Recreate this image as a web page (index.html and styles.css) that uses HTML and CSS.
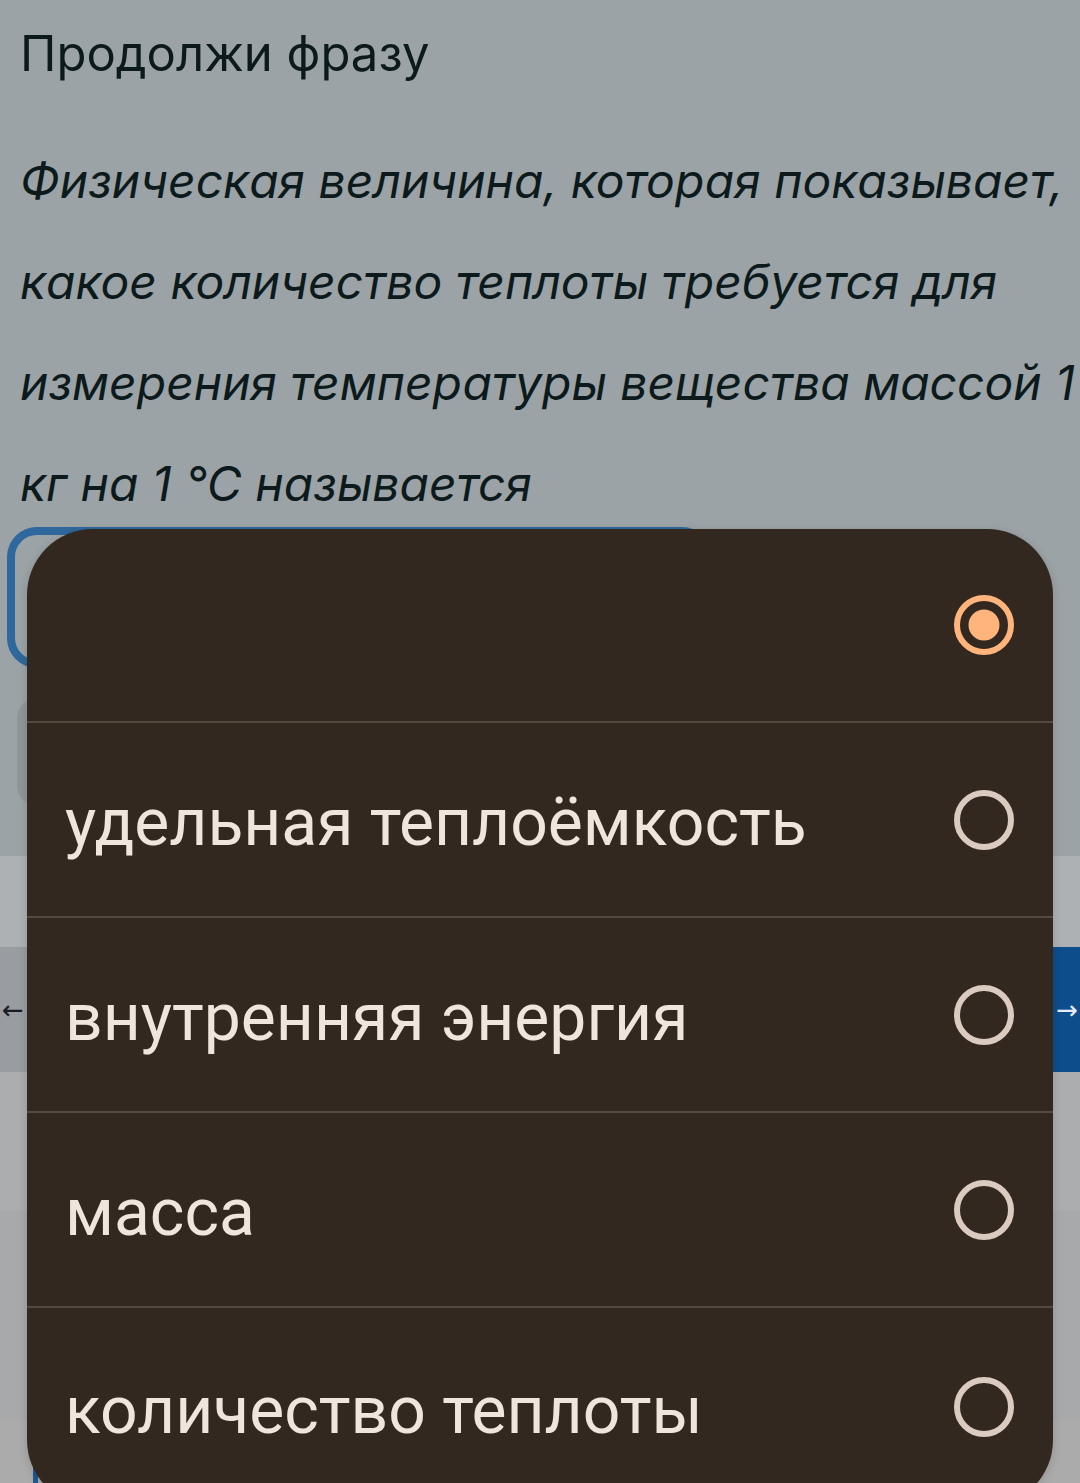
FILE: index.html
```html
<!DOCTYPE html>
<html lang="ru">

<head>
    <meta charset="UTF-8">
    <meta name="viewport" content="width=device-width, initial-scale=1.0">
    <title>Продолжи фразу</title>
    <link rel="stylesheet" href="styles.css">
</head>

<body>
    <!-- задание -->
    <main class="exercise">
        <h1 class="task-title">Продолжи фразу</h1>
        <p class="task-text">Физическая величина, которая показывает,<br>
            какое количество теплоты требуется для<br>
            измерения температуры вещества массой 1<br>
            кг на 1 °C называется</p>
        <div class="answer-select"></div>
        <button class="check-btn" type="button"></button>
    </main>

    <!-- нижняя часть страницы -->
    <footer class="footer">
        <div class="band band-a"></div>
        <nav class="nav-row">
            <button class="nav-btn nav-prev" type="button">&larr;</button>
            <button class="nav-btn nav-next" type="button">&rarr;</button>
        </nav>
        <div class="band band-b"></div>
        <div class="band band-c"></div>
        <div class="band band-d"><span class="mini-field"></span></div>
    </footer>

    <!-- выпадающий список вариантов -->
    <div class="picker" role="radiogroup">
        <label class="option option-empty">
            <span class="option-text"></span>
            <svg class="radio radio-on" viewBox="0 0 64 64" width="64" height="64">
                <circle cx="32" cy="32" r="27" fill="none" stroke="#ffb47c" stroke-width="6"/>
                <circle cx="32" cy="32" r="15.5" fill="#ffb47c"/>
            </svg>
        </label>
        <label class="option">
            <span class="option-text">удельная теплоёмкость</span>
            <svg class="radio" viewBox="0 0 64 64" width="64" height="64">
                <circle cx="32" cy="32" r="27" fill="none" stroke="#dbcac0" stroke-width="6"/>
            </svg>
        </label>
        <label class="option">
            <span class="option-text">внутренняя энергия</span>
            <svg class="radio" viewBox="0 0 64 64" width="64" height="64">
                <circle cx="32" cy="32" r="27" fill="none" stroke="#dbcac0" stroke-width="6"/>
            </svg>
        </label>
        <label class="option">
            <span class="option-text">масса</span>
            <svg class="radio" viewBox="0 0 64 64" width="64" height="64">
                <circle cx="32" cy="32" r="27" fill="none" stroke="#dbcac0" stroke-width="6"/>
            </svg>
        </label>
        <label class="option option-last">
            <span class="option-text">количество теплоты</span>
            <svg class="radio" viewBox="0 0 64 64" width="64" height="64">
                <circle cx="32" cy="32" r="27" fill="none" stroke="#dbcac0" stroke-width="6"/>
            </svg>
        </label>
    </div>
</body>

</html>
```

FILE: styles.css
```css
html,
body {
    margin: 0;
    height: 100%;
    overflow: hidden;
}

body {
    background-color: #9ba3a6;
    font-family: Inter, "Noto Sans", sans-serif;
    color: #0c1a1c;
    position: relative;
}

/* задание */
.exercise {
    padding: 22px 0 0 20px;
    height: 856px;
    box-sizing: border-box;
}

.task-title {
    margin: 0;
    font-size: 49px;
    font-weight: 400;
    line-height: 64px;
}

.task-text {
    margin: 44px 0 0;
    font-size: 48px;
    font-style: italic;
    line-height: 101px;
    white-space: nowrap;
}

.answer-select {
    margin: -7px 0 0 -13px;
    width: 705px;
    height: 141px;
    box-sizing: border-box;
    border: 8px solid #2f689c;
    border-radius: 30px;
}

.check-btn {
    display: block;
    margin: 29px 0 0 -3px;
    width: 420px;
    height: 110px;
    border: none;
    border-radius: 22px;
    background-color: #8f9699;
}

/* полосы внизу */
.footer {
    display: flex;
    flex-direction: column;
}

.band-a {
    height: 91px;
    background-color: #aeb1b3;
}

.nav-row {
    display: flex;
    height: 125px;
}

.nav-btn {
    flex: 1;
    border: none;
    font-family: "DejaVu Sans", sans-serif;
    font-size: 26px;
    padding: 0;
}

.nav-prev {
    background-color: #999da1;
    color: #1a1d20;
    text-align: left;
    padding-left: 2px;
}

.nav-next {
    background-color: #0e4d8b;
    color: #e6eef5;
    text-align: right;
    padding-right: 2px;
}

.band-b {
    height: 139px;
    background-color: #abadaf;
}

.band-c {
    height: 209px;
    background-color: #a7a9ab;
}

.band-d {
    height: 80px;
    background-color: #ababab;
    padding: 40px 0 0 33px;
    box-sizing: border-box;
}

.mini-field {
    display: block;
    width: 200px;
    height: 60px;
    border-left: 5px solid #1d5a94;
    border-top: 5px solid #1d5a94;
}

/* выпадающий список */
.picker {
    position: absolute;
    left: 27px;
    top: 529px;
    width: 1026px;
    height: 977px;
    background-color: #32281f;
    border-radius: 66px;
    box-shadow: 0 2px 10px rgba(0, 0, 0, 0.15);
    overflow: hidden;
    display: flex;
    flex-direction: column;
}

.option {
    height: 193px;
    flex-shrink: 0;
    border-top: 2px solid #54493f;
    display: flex;
    align-items: center;
    justify-content: space-between;
    padding: 0 37px 0 38px;
    font-family: Roboto, "Noto Sans", sans-serif;
    font-size: 66px;
    color: #efe5df;
}

.option-empty {
    height: 192px;
    border-top: none;
}

.option-last {
    flex: 1;
}

.option-text {
    padding-top: 6px;
}

.radio {
    display: block;
}
```
